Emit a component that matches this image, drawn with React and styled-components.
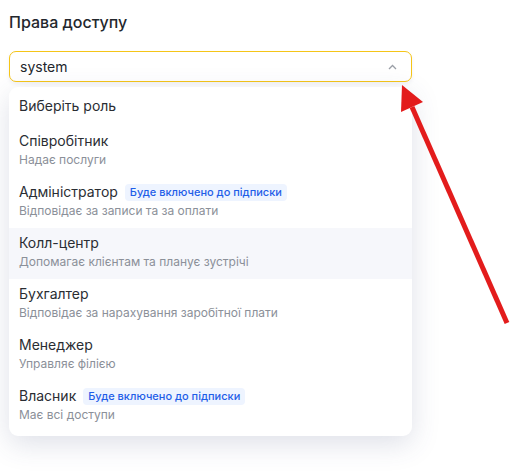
import React from 'react';
import styled, { createGlobalStyle } from 'styled-components';

const Global = createGlobalStyle`
body {
  margin: 0;
  background: #ffffff;
  font-family: Inter, "Noto Sans", sans-serif;
}
`
const Page = styled.div`
position: relative;
width: 510px;
height: 475px;
padding: 11px 98px 0 9px;
box-sizing: border-box;
`
const Title = styled.h2`
margin: 0 0 18px;
font-size: 16px;
line-height: 22px;
font-weight: 500;
color: #23272d;
`
const Select = styled.div`
display: flex;
align-items: center;
justify-content: space-between;
height: 29px;
padding: 0 14px 0 10px;
border: 1px solid #f5c518;
border-radius: 7px;
background: #fff;
box-shadow: 0 2px 4px rgba(30, 40, 80, 0.06);
font-size: 14px;
color: #23262b;
`
const Chevron = styled.svg`
width: 9px;
height: 6px;
`
const Menu = styled.div`
margin-top: 5px;
padding: 4px 0 4px;
border-radius: 9px;
background: #fff;
box-shadow: 0 8px 28px rgba(60, 70, 120, 0.17);
`
const Option = styled.div`
padding: ${p => p.$plain ? '5px 10px 10px' : '5px 10px 9px'};
background: ${p => p.$active ? '#f6f7fb' : 'transparent'};
`
const Row = styled.div`
display: flex;
align-items: center;
gap: 7px;
font-size: 14px;
line-height: 20px;
color: #2a2d33;
`
const Desc = styled.div`
font-size: 12px;
line-height: 17px;
color: #8b9099;
`
const Badge = styled.span`
padding: 0 5px;
border-radius: 4px;
background: #eef4ff;
color: #1f5ee8;
font-size: 11px;
line-height: 17px;
font-weight: 500;
`
const Arrow = styled.svg`
position: absolute;
left: 0;
top: 0;
pointer-events: none;
`

const roles = [
  { name: 'Співробітник', desc: 'Надає послуги' },
  { name: 'Адміністратор', desc: 'Відповідає за записи та за оплати', badge: true },
  { name: 'Колл-центр', desc: 'Допомагає клієнтам та планує зустрічі', active: true },
  { name: 'Бухгалтер', desc: 'Відповідає за нарахування заробітної плати' },
  { name: 'Менеджер', desc: 'Управляє філією' },
  { name: 'Власник', desc: 'Має всі доступи', badge: true },
]

export default function App() {
  return (
    <Page>
      <Global />
      <Title>Права доступу</Title>
      <Select>
        system
        <Chevron viewBox="0 0 9 6">
          <path d="M1 5 L4.5 1.5 L8 5" fill="none" stroke="#9a9ea6" strokeWidth="1.3" />
        </Chevron>
      </Select>
      <Menu>
        <Option $plain>
          <Row>Виберіть роль</Row>
        </Option>
        {roles.map(r => (
          <Option key={r.name} $active={r.active}>
            <Row>
              {r.name}
              {r.badge && <Badge>Буде включено до підписки</Badge>}
            </Row>
            <Desc>{r.desc}</Desc>
          </Option>
        ))}
      </Menu>
      <Arrow width="510" height="475" viewBox="0 0 510 475">
        <line x1="507" y1="323" x2="412" y2="107" stroke="#e31c1c" strokeWidth="5" />
        <polygon points="402,85 423,102 401,112" fill="#e31c1c" />
      </Arrow>
    </Page>
  )
}
